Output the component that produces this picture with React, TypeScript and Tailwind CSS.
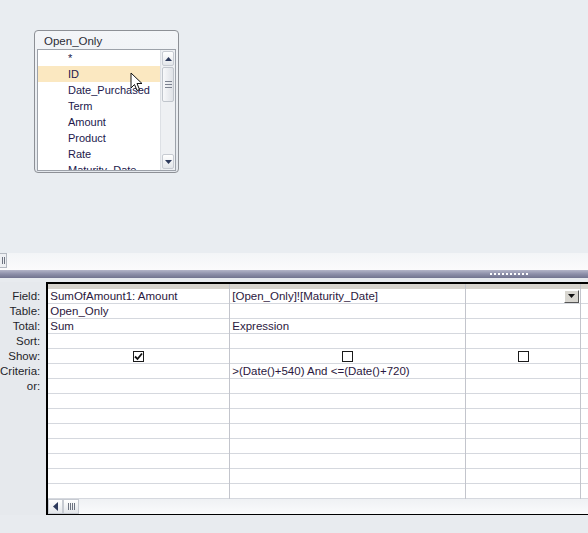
import React from 'react';

const fields = ['*', 'ID', 'Date_Purchased', 'Term', 'Amount', 'Product', 'Rate', 'Maturity_Date'];
const labels = ['Field:', 'Table:', 'Total:', 'Sort:', 'Show:', 'Criteria:', 'or:'];

type Col = { w: string; cells: string[] };

const cols: Col[] = [
  { w: 'w-[182px]', cells: ['SumOfAmount1: Amount', 'Open_Only', 'Sum', '', 'check', '', ''] },
  { w: 'w-[236px]', cells: ['[Open_Only]![Maturity_Date]', '', 'Expression', '', 'box', '>(Date()+540) And <=(Date()+720)', ''] },
  { w: 'w-[115px]', cells: ['drop', '', '', '', 'box', '', ''] },
  { w: 'w-[20px]', cells: ['', '', '', '', '', '', ''] },
];

const ROWS = 14;

function Check({ on }: { on?: boolean }) {
  return (
    <div className="w-[11px] h-[11px] border border-[#1a1a1a] bg-white flex items-center justify-center">
      {on && (
        <svg width="9" height="9" viewBox="0 0 9 9">
          <path d="M1 4.5 L3.5 7 L8 1.5" stroke="#111" strokeWidth="1.8" fill="none" />
        </svg>
      )}
    </div>
  );
}

function Cell({ v }: { v: string }) {
  if (v === 'check' || v === 'box')
    return (
      <div className="h-full flex items-center justify-center">
        <Check on={v === 'check'} />
      </div>
    );
  if (v === 'drop')
    return (
      <div className="h-full flex items-center justify-end pr-[1px]">
        <div className="w-[15px] h-[13px] bg-[#d8d6d0] border-r border-b border-[#555] border-l border-t border-l-white border-t-white flex items-center justify-center">
          <svg width="7" height="4" viewBox="0 0 7 4">
            <path d="M0 0 H7 L3.5 4 Z" fill="#111" />
          </svg>
        </div>
      </div>
    );
  return <div className="h-full pl-[2px] leading-[14px] whitespace-nowrap text-[#2b1840]">{v}</div>;
}

function FieldList() {
  return (
    <div className="ml-[34px] mt-[30px] w-[145px] h-[143px] rounded-[4px] border border-[#8d9096] bg-gradient-to-b from-[#f3f5f8] to-[#e4e8ed] px-[2px] relative">
      <div className="h-[18px] pl-[7px] text-[11.5px] leading-[20px] text-[#2c2c36]">Open_Only</div>
      <div className="h-[122px] border border-[#9da2aa] bg-white flex overflow-hidden">
        <div className="flex-1 overflow-hidden">
          {fields.map((f, i) => (
            <div
              key={f}
              className={`h-[16px] pl-[30px] text-[11px] leading-[16px] whitespace-nowrap text-[#22184c] ${i === 1 ? 'bg-[#fbe8c1]' : ''}`}
            >
              {f}
            </div>
          ))}
        </div>
        <div className="w-[15px] bg-[#eef0f3] border-l border-[#dde0e5] flex flex-col">
          <div className="h-[15px] m-[1px] border border-[#c7cbd2] rounded-[2px] bg-gradient-to-b from-white to-[#e3e6ea] flex items-center justify-center">
            <svg width="7" height="4" viewBox="0 0 7 4">
              <path d="M0 4 H7 L3.5 0 Z" fill="#2d3a5c" />
            </svg>
          </div>
          <div className="h-[35px] mx-[1px] border border-[#c0c5cc] rounded-[2px] bg-gradient-to-r from-[#f7f8fa] to-[#dfe2e7] flex flex-col items-center justify-center gap-[2px]">
            <div className="w-[7px] h-px bg-[#7c8290]" />
            <div className="w-[7px] h-px bg-[#7c8290]" />
            <div className="w-[7px] h-px bg-[#7c8290]" />
          </div>
          <div className="flex-1" />
          <div className="h-[15px] m-[1px] border border-[#c7cbd2] rounded-[2px] bg-gradient-to-b from-white to-[#e3e6ea] flex items-center justify-center">
            <svg width="7" height="4" viewBox="0 0 7 4">
              <path d="M0 0 H7 L3.5 4 Z" fill="#2d3a5c" />
            </svg>
          </div>
        </div>
      </div>
      <svg className="absolute left-[95px] top-[41px]" width="13" height="20" viewBox="0 0 13 20">
        <path d="M1 1 L1 16 L4.5 12.5 L7 18.5 L9.5 17.5 L7 11.5 L12 11.5 Z" fill="white" stroke="#111" strokeWidth="1" />
      </svg>
    </div>
  );
}

export default function App() {
  return (
    <div className="w-[588px] h-[533px] overflow-hidden bg-[#e8ebef] flex flex-col" style={{ fontFamily: '"Liberation Sans", Arial, sans-serif' }}>
      <div className="h-[270px] bg-[#e9edf1] flex flex-col">
        <div className="h-[253px]">
          <FieldList />
        </div>
        <div className="h-[17px] bg-gradient-to-b from-[#f3f5f7] to-[#fbfbfc] flex items-start">
          <div className="w-[7px] h-[15px] border border-[#b4b9c1] border-l-0 bg-[#eef0f3] flex items-center justify-center gap-[1px]">
            <div className="w-px h-[7px] bg-[#6d7380]" />
            <div className="w-px h-[7px] bg-[#6d7380]" />
          </div>
        </div>
      </div>
      <div className="h-[8px] bg-gradient-to-b from-[#b4b5c8] via-[#8d8fa9] to-[#72748f] flex items-center justify-end pr-[60px]">
        <div className="flex gap-[2px]">
          {Array.from({ length: 10 }).map((_, i) => (
            <div key={i} className="w-[2px] h-[2px] bg-white" />
          ))}
        </div>
      </div>
      <div className="h-[4px] bg-[#e8ebef]" />
      <div className="flex">
        <div className="w-[47px] pt-[7px] bg-[#e6e9ed] text-[11.5px] text-[#1f1f2a]">
          {labels.map((l) => (
            <div key={l} className="h-[15px] leading-[15px] text-right pr-[6px]">
              {l}
            </div>
          ))}
        </div>
        <div className="flex-1 border-t-2 border-l-2 border-b-2 border-black bg-white flex flex-col text-[11.5px] h-[233px]">
          <div className="flex h-[216px]">
            {cols.map((c, ci) => (
              <div key={ci} className={`${c.w} shrink-0 border-r border-[#c3c5cc] flex flex-col`}>
                <div className="h-[5px] bg-[#d6d3cd]" />
                {Array.from({ length: ROWS }).map((_, r) => (
                  <div key={r} className="h-[15px] border-b border-[#d5d8de]">
                    <Cell v={c.cells[r] ?? ''} />
                  </div>
                ))}
              </div>
            ))}
          </div>
          <div className="h-[15px] bg-gradient-to-b from-[#eff1f4] to-[#fafbfc] flex">
            <div className="w-[15px] h-[15px] border border-[#c7cbd2] bg-gradient-to-b from-white to-[#e3e6ea] flex items-center justify-center">
              <svg width="5" height="9" viewBox="0 0 5 9">
                <path d="M5 0 V9 L0 4.5 Z" fill="#2d3a5c" />
              </svg>
            </div>
            <div className="w-[16px] h-[15px] border border-[#c7cbd2] bg-gradient-to-b from-white to-[#e3e6ea] flex items-center justify-center gap-[1px]">
              <div className="w-px h-[7px] bg-[#6d7380]" />
              <div className="w-px h-[7px] bg-[#6d7380]" />
              <div className="w-px h-[7px] bg-[#6d7380]" />
              <div className="w-px h-[7px] bg-[#6d7380]" />
            </div>
          </div>
        </div>
      </div>
    </div>
  );
}
